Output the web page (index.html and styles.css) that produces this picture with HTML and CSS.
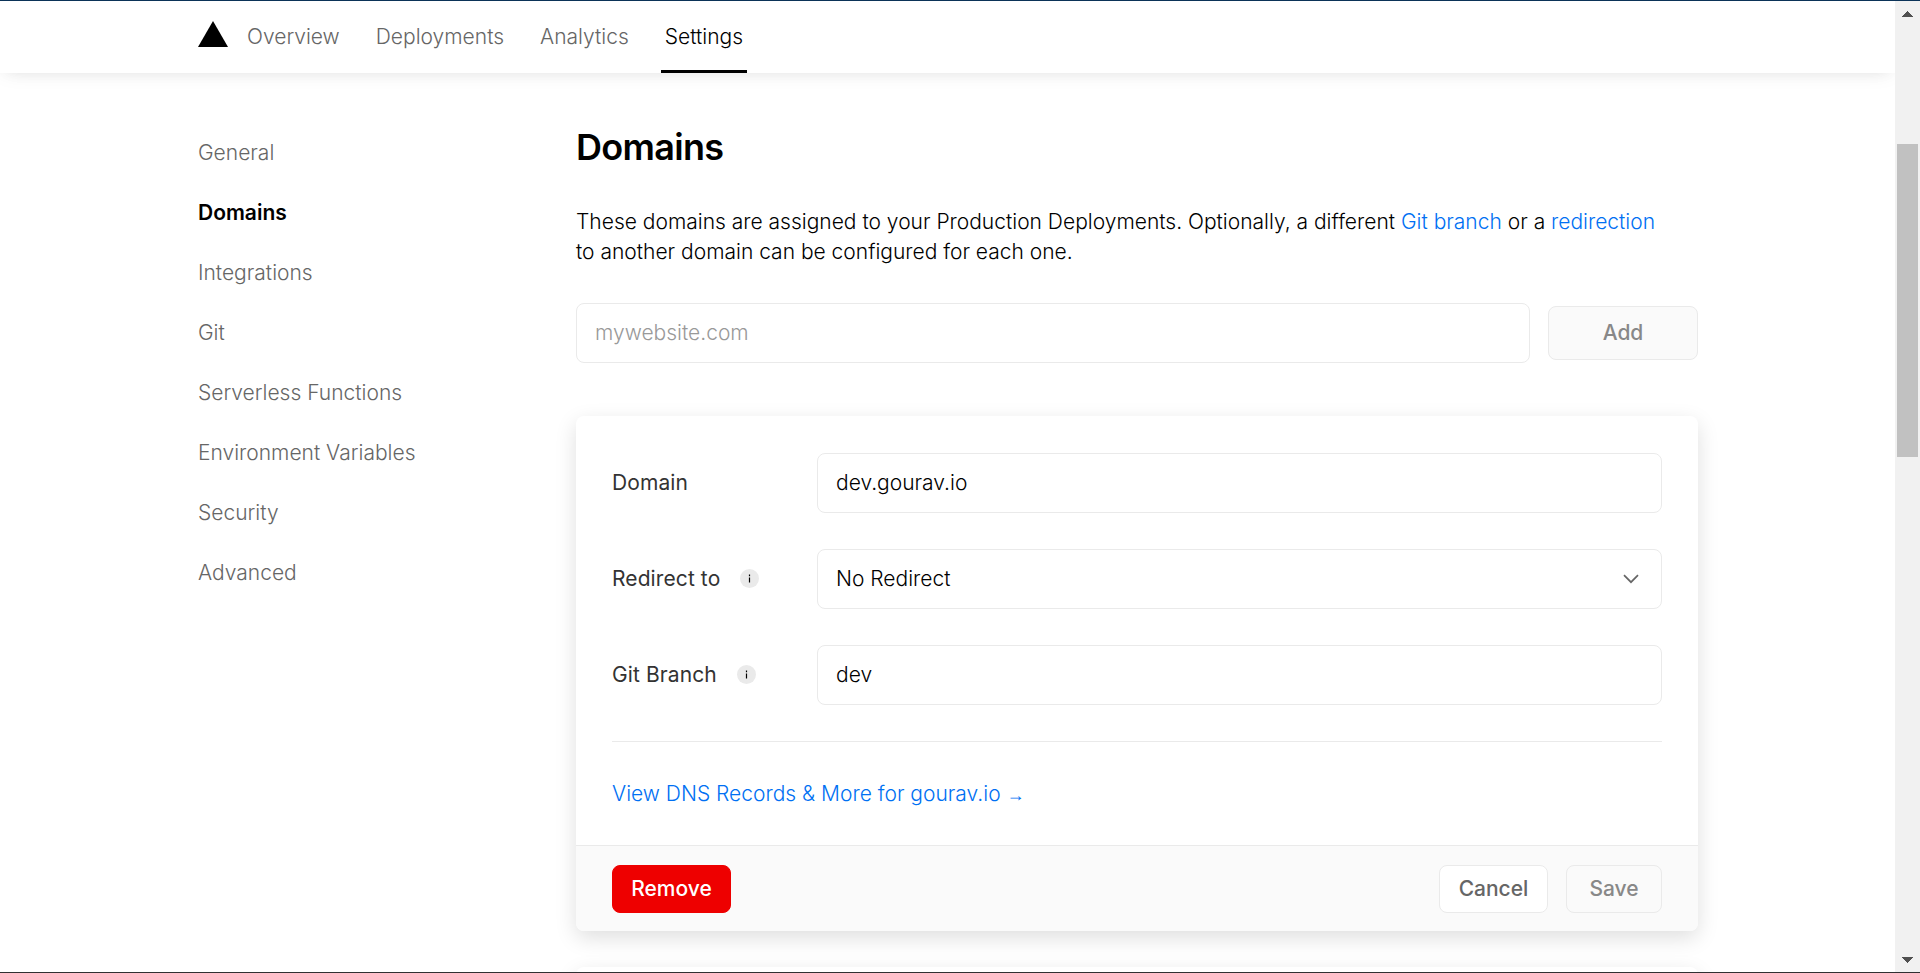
FILE: index.html
```html
<!DOCTYPE html>
<html lang="en">
<head>
<meta charset="utf-8">
<title>Domains</title>
<link rel="stylesheet" href="styles.css">
</head>
<body>
<div class="window">
  <div class="page">
    <header class="header">
      <svg class="logo" viewBox="0 0 30 26" aria-hidden="true"><path d="M15 0L30 26H0z"/></svg>
      <nav class="tabs">
        <a class="tab">Overview</a>
        <a class="tab">Deployments</a>
        <a class="tab">Analytics</a>
        <a class="tab active">Settings</a>
      </nav>
    </header>
    <div class="content">
      <aside class="sidebar">
        <a>General</a>
        <a class="current">Domains</a>
        <a>Integrations</a>
        <a>Git</a>
        <a>Serverless Functions</a>
        <a>Environment Variables</a>
        <a>Security</a>
        <a>Advanced</a>
      </aside>
      <main class="main">
        <h1>Domains</h1>
        <p class="intro">These domains are assigned to your Production Deployments. Optionally, a different <a>Git branch</a> or a <a>redirection</a><br>to another domain can be configured for each one.</p>
        <div class="add-row">
          <div class="field placeholder">mywebsite.com</div>
          <button class="button add">Add</button>
        </div>
        <section class="card">
          <div class="card-body">
            <div class="row">
              <div class="label">Domain</div>
              <div class="field">dev.gourav.io</div>
            </div>
            <div class="row">
              <div class="label">Redirect to
                <svg class="info" viewBox="0 0 19 19"><circle cx="9.5" cy="9.5" r="9.5" fill="#eaeaea"/><path d="M8.9 5.6h1.2v1.7H8.9zM8.9 8.5h1.2v5H8.9z"/></svg>
              </div>
              <div class="field">No Redirect
                <svg class="chevron" viewBox="0 0 16 10"><path d="M1 1.2l7 7 7-7" fill="none" stroke="#666" stroke-width="1.7"/></svg>
              </div>
            </div>
            <div class="row">
              <div class="label">Git Branch
                <svg class="info" viewBox="0 0 19 19"><circle cx="9.5" cy="9.5" r="9.5" fill="#eaeaea"/><path d="M8.9 5.6h1.2v1.7H8.9zM8.9 8.5h1.2v5H8.9z"/></svg>
              </div>
              <div class="field">dev</div>
            </div>
            <div class="dns"><a>View DNS Records &amp; More for gourav.io <span class="go">→</span></a></div>
          </div>
          <footer class="card-footer">
            <button class="button remove">Remove</button>
            <button class="button cancel">Cancel</button>
            <button class="button save">Save</button>
          </footer>
        </section>
        <section class="card next"></section>
      </main>
    </div>
  </div>
  <div class="scrollbar">
    <svg class="arrow" viewBox="0 0 11 6" shape-rendering="crispEdges"><path d="M5.5 0L11 6H0z"/></svg>
    <div class="thumb"></div>
    <svg class="arrow down" viewBox="0 0 11 6" shape-rendering="crispEdges"><path d="M0 0h11L5.5 6z"/></svg>
  </div>
</div>
</body>
</html>
```
FILE: styles.css
```css
* { box-sizing: border-box; }
body {
  margin: 0;
  height: 973px;
  overflow: hidden;
  background: #fff;
  color: #000;
  font: 350 21px/30px Inter, "Liberation Sans", sans-serif;
}
.window {
  display: flex;
  height: 973px;
  border-top: 1px solid #0b3358;
  border-bottom: 1px solid #303032;
}
.page { width: 1895px; height: 971px; overflow: hidden; }
.header {
  display: flex;
  height: 72px;
  padding-left: 198px;
  background: #fff;
  box-shadow: 0 0 22px -3px rgba(0, 0, 0, .1), 0 5px 15px -8px rgba(0, 0, 0, .08);
}
.logo { width: 30px; height: 26px; margin-top: 20px; }
.tabs { display: flex; gap: 28px; margin-left: 15px; }
.tab { height: 72px; padding: 21px 4px 0; color: #666; }
.tab.active { color: #000; border-bottom: 3px solid #000; }
.content { display: flex; padding-left: 198px; }
.sidebar {
  display: flex;
  flex-direction: column;
  gap: 30px;
  width: 378px;
  padding-top: 65px;
  color: #666;
}
.sidebar .current { color: #000; font-weight: 600; }
.main { width: 1122px; padding-top: 49px; }
h1 { margin: 0; font-size: 36px; line-height: 50px; font-weight: 600; letter-spacing: -.7px; }
.intro { margin: 35px 0 0; }
.intro a, .dns a { color: #0070f3; }
.add-row { display: flex; align-items: center; gap: 18px; margin-top: 36px; }
.field {
  display: flex;
  flex: 1;
  align-items: center;
  justify-content: space-between;
  height: 60px;
  padding: 0 22px 0 18px;
  border: 1px solid #eaeaea;
  border-radius: 8px;
  background: #fff;
}
.placeholder { color: #999; }
.button {
  height: 48px;
  padding: 0;
  border: 1px solid #eaeaea;
  border-radius: 8px;
  background: #fafafa;
  color: #888;
  font: 500 21px/30px Inter, "Liberation Sans", sans-serif;
}
.add { width: 150px; height: 54px; }
.card {
  margin-top: 53px;
  overflow: hidden;
  border-radius: 8px;
  background: #fff;
  box-shadow: 0 7px 21px rgba(0, 0, 0, .13);
}
.card-body { padding: 37px 36px 0; height: 429px; }
.row { display: flex; align-items: center; margin-bottom: 36px; }
.label { display: flex; align-items: center; gap: 20px; width: 205px; color: #333; font-weight: 400; letter-spacing: .1px; }
.info { width: 19px; height: 19px; margin-top: -2px; }
.chevron { width: 16px; height: 10px; }
.dns { border-top: 1px solid #eaeaea; padding-top: 37px; }
.go { font-family: "Liberation Sans", sans-serif; font-size: 18px; }
.card-footer {
  display: flex;
  align-items: center;
  gap: 18px;
  height: 86px;
  padding: 0 36px;
  border-top: 1px solid #eaeaea;
  background: #fafafa;
}
.remove { width: 119px; margin-right: auto; border-color: #e00; background: #e00; color: #fff; }
.cancel { width: 109px; background: #fff; color: #666; }
.save { width: 96px; }
.next { height: 100px; margin-top: 36px; }
.scrollbar {
  display: flex;
  flex-direction: column;
  align-items: center;
  width: 25px;
  padding: 10px 0 9px;
  background: #f1f1f1;
}
.arrow { width: 11px; height: 6px; fill: #505050; }
.thumb { width: 21px; height: 313px; margin-top: 127px; background: #c1c1c1; }
.down { margin-top: auto; }
```
